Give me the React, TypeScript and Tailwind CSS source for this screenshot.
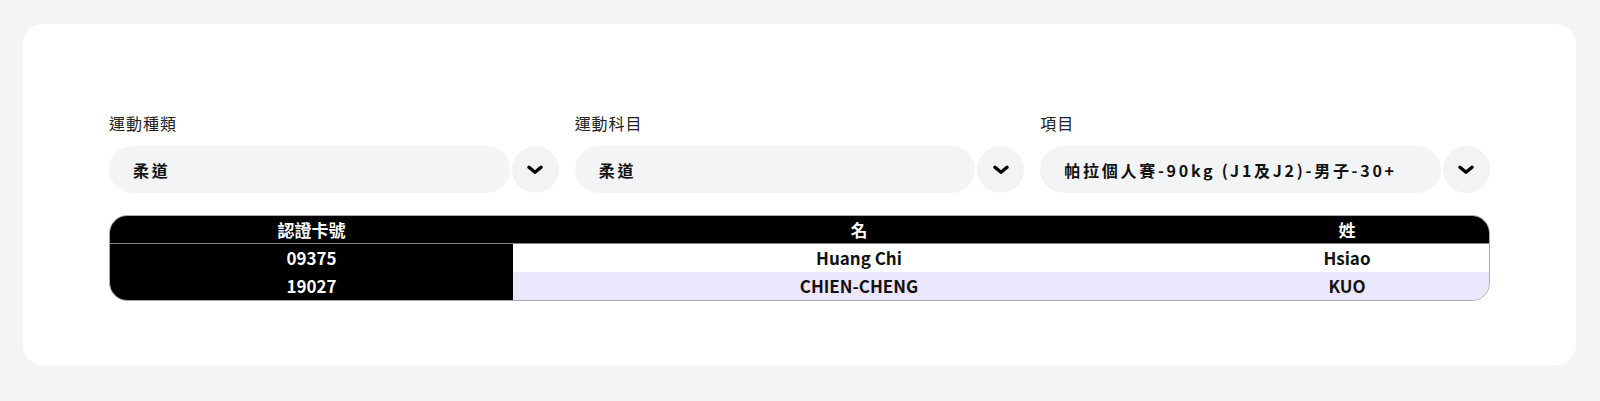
import React from "react";

const font = { fontFamily: '"Noto Sans CJK TC", "Noto Sans", sans-serif' };

function Chevron() {
  return (
    <svg width="16" height="10" viewBox="0 0 16 10" fill="none">
      <path d="M2 2.3 L8 7.2 L14 2.3" stroke="#000" strokeWidth="3.4" strokeLinecap="round" strokeLinejoin="round" />
    </svg>
  );
}

function Select({ label, value }: { label: string; value: string }) {
  return (
    <div className="flex flex-col">
      <div className="text-[16px] leading-[22px] tracking-[0.06em] text-[#222] mb-[12px]">{label}</div>
      <div className="flex items-center gap-[2px]">
        <div className="flex-1 h-[47px] rounded-full bg-[#f3f4f6] flex items-center pl-[24px] text-[16px] font-bold tracking-[0.17em] text-[#111]">
          {value}
        </div>
        <div className="w-[47px] h-[47px] rounded-full bg-[#f3f3f4] flex items-center justify-center">
          <Chevron />
        </div>
      </div>
    </div>
  );
}

const rows = [
  { id: "09375", first: "Huang Chi", last: "Hsiao", bg: "bg-white" },
  { id: "19027", first: "CHIEN-CHENG", last: "KUO", bg: "bg-[#ece6fc]" },
];

export default function App() {
  return (
    <div className="min-h-[401px] bg-[#f3f4f6] pt-[24px] pl-[23px] pr-[24px] pb-[36px]" style={font}>
      <div className="bg-white rounded-[20px] h-[341px] px-[86px] pt-[88px]">
        <div className="grid grid-cols-3 gap-4">
          <Select label="運動種類" value="柔道" />
          <Select label="運動科目" value="柔道" />
          <Select label="項目" value="帕拉個人賽-90kg (J1及J2)-男子-30+" />
        </div>
        <div className="mt-[22px] rounded-[18px] border border-[#a8a8b0] overflow-hidden">
          <div className="grid grid-cols-[403px_692px_1fr] bg-black text-white font-bold text-[17px] h-[28px] items-center border-b border-[#888]">
            <div className="text-center leading-[28px]">認證卡號</div>
            <div className="text-center leading-[28px]">名</div>
            <div className="text-center leading-[28px]">姓</div>
          </div>
          {rows.map((r) => (
            <div key={r.id} className={`grid grid-cols-[403px_692px_1fr] font-bold text-[17px] h-[28px] ${r.bg}`}>
              <div className="bg-black text-white text-center leading-[28px]">{r.id}</div>
              <div className="text-center leading-[28px] text-[#111]">{r.first}</div>
              <div className="text-center leading-[28px] text-[#111]">{r.last}</div>
            </div>
          ))}
        </div>
      </div>
    </div>
  );
}
